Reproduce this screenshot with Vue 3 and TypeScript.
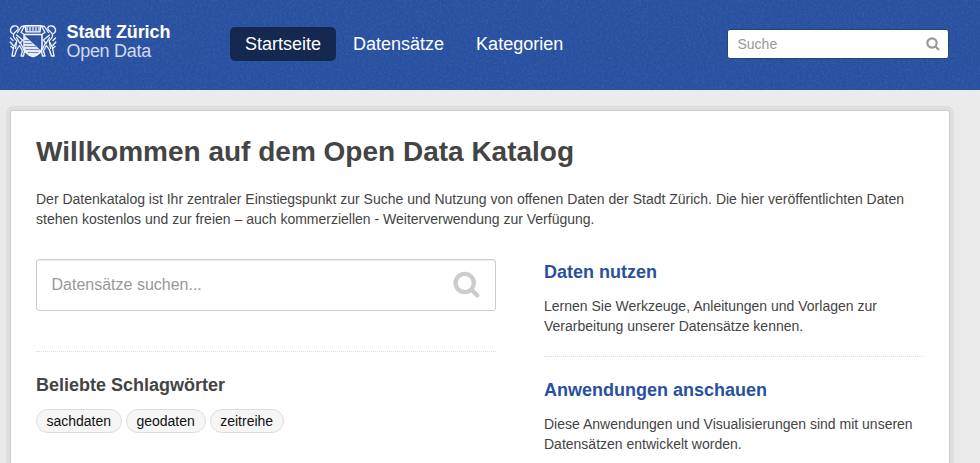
<script setup lang="ts">
import { ref } from 'vue'

interface NavItem {
  label: string
  active?: boolean
}

interface Promo {
  title: string
  text: string
}

const nav: NavItem[] = [
  { label: 'Startseite', active: true },
  { label: 'Datensätze' },
  { label: 'Kategorien' },
]

const tags: string[] = ['sachdaten', 'geodaten', 'zeitreihe']

const promos: Promo[] = [
  {
    title: 'Daten nutzen',
    text: 'Lernen Sie Werkzeuge, Anleitungen und Vorlagen zur Verarbeitung unserer Datensätze kennen.',
  },
  {
    title: 'Anwendungen anschauen',
    text: 'Diese Anwendungen und Visualisierungen sind mit unseren Datensätzen entwickelt worden.',
  },
]

const siteQuery = ref('')
const datasetQuery = ref('')
</script>

<template>
  <div class="page">
    <header class="masthead">
      <svg class="grain" width="100%" height="100%" aria-hidden="true">
        <filter id="grain" x="0" y="0" width="100%" height="100%">
          <feTurbulence type="fractalNoise" baseFrequency="0.45" numOctaves="3" seed="4" />
          <feColorMatrix values="0 0 0 0 1  0 0 0 0 1  0 0 0 0 1  0.14 0 0 0 -0.055" />
        </filter>
        <rect width="100%" height="100%" filter="url(#grain)" />
      </svg>
      <a class="brand">
        <svg class="crest" width="48" height="36" viewBox="0 0 48 36" fill="none" stroke="#fff" stroke-linecap="round" stroke-linejoin="round">
          <path d="M16 1.500l1 6.500h14l1-6.500z" fill="#a9bbdf" stroke-width="1.200" />
          <path d="M19.500 3v4M22.500 3v4M25.500 3v4M28.500 3v4" stroke="#4a6cb2" stroke-width="1" stroke-linecap="butt" />
          <path d="M15 10.500h18v12c0 5-3.500 8.500-9 10-5.500-1.500-9-5-9-10z" stroke-width="1.500" />
          <path d="M15 11l17 15.500c-1.500 3-4 5-8 6-5.500-1.500-9-5-9-10z" fill="#e6ecf7" stroke="none" />
          <path d="M15.500 16.500h5M15.500 19.500h8M15.500 22.500h11.500M16.500 25.500h14M19 28.500h10.500" stroke="#6d8ac4" stroke-width="1" stroke-linecap="butt" />
          <g id="lion" stroke-width="1.350" stroke="#eef2fa">
            <path d="M3.500 9.500C.5 8 .8 3 5 2c3-.6 4.800 1.200 4 3.200S5.500 7.500 4.500 10.500c-.5 2.500 1 4.500 3.500 6.500l-3.500 6.500-1.500 8.500h2.500l2-6 3-4.500 3 5.500-1.500 5h2.500l1-5-4-8" />
            <path d="M8.500 8.500l4-6 3-.5-3.500 6.500 2.500 1.500M7.500 11l6 5-2.500 3.500-3.500-6M1.500 14l2.500 2.500M1.200 18l3 3.500M2 22.500l2.500 2M7.500 18.500l-1 6" />
          </g>
          <use href="#lion" transform="translate(48 0) scale(-1 1)" />
        </svg>
        <span class="brand-text">
          <b>Stadt Zürich</b>
          <span>Open Data</span>
        </span>
      </a>
      <nav class="nav">
        <a v-for="item in nav" :key="item.label" class="nav-item" :class="{ active: item.active }">{{ item.label }}</a>
      </nav>
      <form class="site-search" @submit.prevent>
        <input v-model="siteQuery" type="text" placeholder="Suche" />
        <svg width="14" height="14" viewBox="0 0 14 14" fill="none" stroke="#999" stroke-width="2.200">
          <circle cx="6" cy="6" r="4.700" />
          <path d="M9.500 9.500l2.800 2.800" stroke-linecap="round" />
        </svg>
      </form>
    </header>

    <main class="wrapper">
      <h1>Willkommen auf dem Open Data Katalog</h1>
      <p class="intro">
        Der Datenkatalog ist Ihr zentraler Einstiegspunkt zur Suche und Nutzung von offenen Daten der Stadt Zürich. Die hier veröffentlichten Daten stehen kostenlos und zur freien – auch kommerziellen - Weiterverwendung zur Verfügung.
      </p>
      <div class="columns">
        <section class="primary">
          <form class="dataset-search" @submit.prevent>
            <input v-model="datasetQuery" type="text" placeholder="Datensätze suchen..." />
            <svg width="28" height="28" viewBox="0 0 28 28" fill="none" stroke="#ccc" stroke-width="4.300">
              <circle cx="11.700" cy="12" r="9.100" />
              <path d="M18.500 18.800l5.800 5.600" stroke-linecap="round" />
            </svg>
          </form>
          <div class="popular">
            <h3>Beliebte Schlagwörter</h3>
            <div class="tags">
              <a v-for="tag in tags" :key="tag" class="tag">{{ tag }}</a>
            </div>
          </div>
        </section>
        <aside class="secondary">
          <article v-for="promo in promos" :key="promo.title" class="promo">
            <h3>{{ promo.title }}</h3>
            <p>{{ promo.text }}</p>
          </article>
        </aside>
      </div>
    </main>
  </div>
</template>

<style>
body {
  background: #ebebeb;
}
</style>

<style scoped>
* {
  box-sizing: border-box;
}
.page {
  height: 463px;
  overflow: hidden;
  background: #ebebeb;
  color: #444;
  font: 14px/20px "Liberation Sans", Arial, sans-serif;
}
h1,
h3,
p {
  margin: 0;
}
.masthead {
  position: relative;
  display: flex;
  align-items: flex-start;
  height: 90px;
  padding: 0 31px 0 9px;
  background: #2850a0;
}
.grain {
  position: absolute;
  inset: 0;
}
.brand,
.nav,
.site-search {
  position: relative;
}
.brand {
  display: flex;
  width: 221px;
  padding-top: 24px;
  color: #fff;
}
.crest {
  flex: none;
}
.brand-text {
  display: flex;
  flex-direction: column;
  margin: -1px 0 0 9.500px;
  font-size: 18px;
  line-height: 19px;
  white-space: nowrap;
}
.brand-text b {
  letter-spacing: -0.1px;
}
.brand-text span {
  color: #d0dbef;
  letter-spacing: -0.3px;
}
.nav {
  display: flex;
  gap: 2px;
  padding-top: 27px;
}
.nav-item {
  height: 34px;
  padding: 0 15px;
  border-radius: 5px;
  color: #fff;
  font-size: 18px;
  line-height: 34px;
}
.nav-item.active {
  background: #142850;
}
.site-search {
  display: flex;
  align-items: center;
  width: 222px;
  height: 30px;
  margin: 29px 0 0 auto;
  padding: 0 8px 0 9.500px;
  background: #fff;
  border: 1px solid #1b4a6b;
  border-radius: 3px;
}
input {
  flex: 1;
  min-width: 0;
  padding: 0;
  border: 0;
  outline: 0;
  background: none;
  color: #444;
  font: inherit;
}
input::placeholder {
  color: #999;
  opacity: 1;
}
.wrapper {
  width: 940px;
  height: 400px;
  margin: 20px 0 0 10px;
  padding: 23px 25px 0;
  background: #fff;
  border: 1px solid #ccc;
  border-radius: 3px;
  box-shadow: 0 0 0 4px rgba(0, 0, 0, 0.05);
}
h1 {
  font-size: 28px;
  line-height: 36px;
}
.intro {
  margin-top: 19px;
}
.columns {
  display: flex;
  gap: 48px;
  margin-top: 30px;
}
.primary {
  width: 460px;
}
.dataset-search {
  display: flex;
  align-items: center;
  height: 52px;
  padding: 0 14px 0 14.500px;
  border: 1px solid #ccc;
  border-radius: 3px;
  box-shadow: inset 0 1px 1px rgba(0, 0, 0, 0.075);
  font-size: 16px;
}
.popular {
  margin-top: 40px;
  padding-top: 20px;
  border-top: 1px dotted #ddd;
}
h3 {
  font-size: 18px;
  line-height: 26px;
}
.tags {
  display: flex;
  gap: 4px;
  margin-top: 11px;
}
.tag {
  height: 24px;
  padding: 1px 10px 1px 9.400px;
  border: 1px solid #ddd;
  border-radius: 12px;
  background: #f6f6f6;
  color: #111;
}
.secondary {
  width: 380px;
}
.promo h3 {
  color: #2850a0;
}
.promo p {
  margin-top: 11px;
}
.promo + .promo {
  margin-top: 20px;
  padding-top: 20px;
  border-top: 1px dotted #ddd;
}
</style>
